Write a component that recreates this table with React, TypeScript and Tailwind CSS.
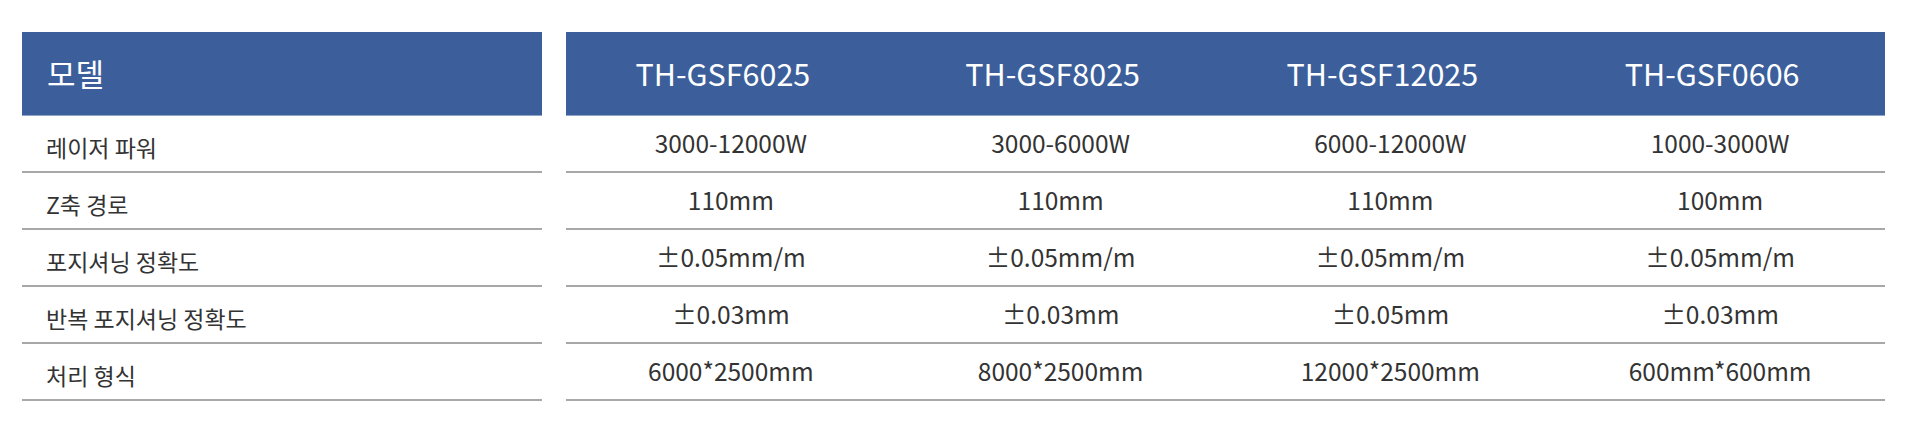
import React from 'react';

const models = ['TH-GSF6025', 'TH-GSF8025', 'TH-GSF12025', 'TH-GSF0606'];

const specs = [
  { label: '레이저 파워', values: ['3000-12000W', '3000-6000W', '6000-12000W', '1000-3000W'] },
  { label: 'Z축 경로', values: ['110mm', '110mm', '110mm', '100mm'] },
  { label: '포지셔닝 정확도', values: ['±0.05mm/m', '±0.05mm/m', '±0.05mm/m', '±0.05mm/m'] },
  { label: '반복 포지셔닝 정확도', values: ['±0.03mm', '±0.03mm', '±0.05mm', '±0.03mm'] },
  { label: '처리 형식', values: ['6000*2500mm', '8000*2500mm', '12000*2500mm', '600mm*600mm'] },
];

export default function App() {
  return (
    <div
      className="w-[1920px] h-[429px] bg-white pl-[22px] pt-[32px] flex gap-[24px]"
      style={{ fontFamily: '"Noto Sans CJK KR", "Noto Sans", sans-serif' }}
    >
      {/* Left: row labels */}
      <div className="w-[520px] flex flex-col">
        <div className="h-[84px] bg-[#3c5f9b] border-b border-[#8fa5c9] flex items-center pl-[25px] text-white text-[31px]">
          모델
        </div>
        {specs.map((s) => (
          <div
            key={s.label}
            className="h-[57px] border-b-2 border-[#a8a8a8] flex items-end pb-[7px] pl-[24px] text-[23px] text-[#333333]"
          >
            {s.label}
          </div>
        ))}
      </div>

      {/* Right: model columns */}
      <div className="w-[1319px] flex flex-col">
        <div className="h-[84px] bg-[#3c5f9b] border-b border-[#8fa5c9]">
          <div className="h-full grid grid-cols-4 items-center ml-[-8px] mr-[8px]">
            {models.map((m) => (
              <div key={m} className="text-center text-white text-[30.5px]">
                {m}
              </div>
            ))}
          </div>
        </div>
        {specs.map((s) => (
          <div
            key={s.label}
            className="h-[57px] border-b-2 border-[#a8a8a8] grid grid-cols-4 items-center text-[24.5px] text-[#333333]"
          >
            {s.values.map((v, i) => (
              <div key={i} className="text-center">
                {v}
              </div>
            ))}
          </div>
        ))}
      </div>
    </div>
  );
}
